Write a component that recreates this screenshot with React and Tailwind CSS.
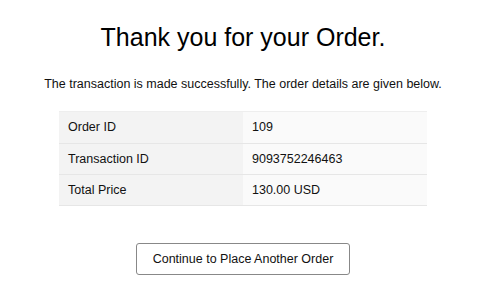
export default function App() {
  const rows = [
    ['Order ID', '109'],
    ['Transaction ID', '9093752246463'],
    ['Total Price', '130.00 USD'],
  ];

  return (
    <div className="w-[500px] h-[292px] bg-white text-[#111]" style={{ fontFamily: '"Liberation Sans", Arial, sans-serif' }}>
      <div className="w-[486px] flex flex-col items-center">
        <h1 className="mt-[22px] text-[25px] leading-[30px] text-black">Thank you for your Order.</h1>
        <p className="mt-[24px] text-[12.5px] leading-[16px]">
          The transaction is made successfully. The order details are given below.
        </p>
        <table className="mt-[19px] w-[368px] text-[12.5px] border-collapse">
          <tbody>
            {rows.map(([k, v], i) => (
              <tr key={k} className={i === 0 ? 'border-t border-[#eeeeee]' : 'border-t border-[#e6e6e6]'}>
                <td className={(i === 0 ? 'h-[32px]' : 'h-[31px]') + ' w-[184px] pl-[9px] bg-[#f3f3f3]'}>{k}</td>
                <td className="pl-[9px] bg-[#fafafa]">{v}</td>
              </tr>
            ))}
            <tr className="border-t border-[#e6e6e6]"><td colSpan={2} className="h-0 p-0"></td></tr>
          </tbody>
        </table>
        <button className="mt-[37px] w-[214px] h-[32px] border border-[#888] rounded-[3px] text-[12.5px] text-[#111] bg-white">
          Continue to Place Another Order
        </button>
      </div>
    </div>
  );
}
